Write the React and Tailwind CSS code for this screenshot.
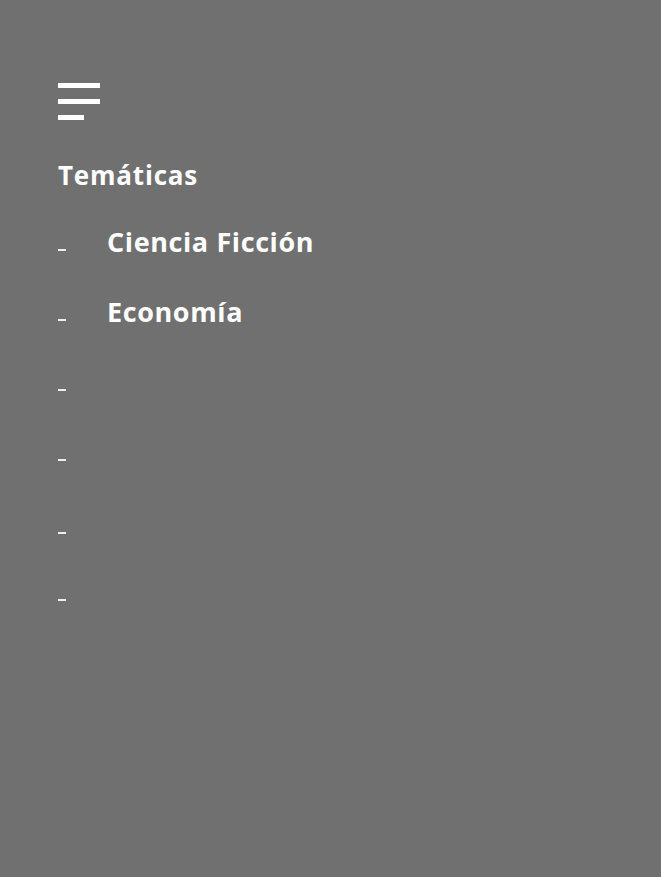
import React from "react";

const temas = [
  { label: "Ciencia Ficción", h: "h-[70px]" },
  { label: "Economía", h: "h-[70px]" },
  { label: "", h: "h-[70px]" },
  { label: "", h: "h-[73px]" },
  { label: "", h: "h-[67px]" },
  { label: "", h: "h-[70px]" },
];

const App = () => {
  return (
    <div
      className="min-h-[877px] w-full bg-[#707070] text-white pl-[58px] pt-[83px]"
      style={{ fontFamily: '"Open Sans", "Noto Sans", sans-serif' }}
    >
      <button className="flex flex-col gap-[11px] w-[42px]">
        <span className="block h-[5px] w-[42px] bg-white"></span>
        <span className="block h-[5px] w-[42px] bg-white"></span>
        <span className="block h-[5px] w-[26px] bg-white"></span>
      </button>

      <h2 className="mt-[39px] text-[26px] leading-[32px] font-bold tracking-[0.8px]">
        Temáticas
      </h2>

      <ul className="mt-[35px]">
        {temas.map((t, i) => (
          <li key={i} className={`${t.h} flex items-start`}>
            <span className="mt-[23px] block h-[2px] w-2 bg-[#eeeeee]"></span>
            {t.label && (
              <a className="ml-[41px] text-[27px] leading-[32px] font-bold tracking-[0.6px] cursor-pointer">
                {t.label}
              </a>
            )}
          </li>
        ))}
      </ul>
    </div>
  );
};

export default App;
